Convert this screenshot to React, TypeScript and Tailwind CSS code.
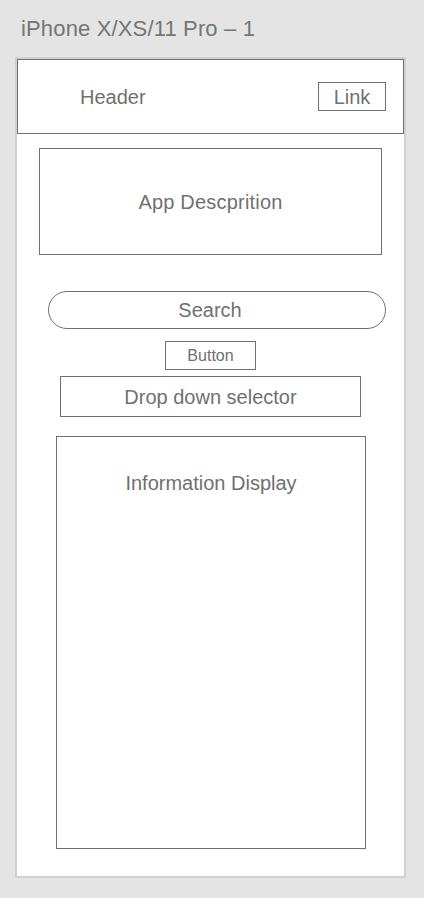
export default function App() {
  const font = { fontFamily: '"Liberation Sans", Arial, sans-serif' };
  return (
    <div className="min-h-screen bg-[#e4e4e4] text-[#707070]" style={font}>
      <div className="pl-[21px] pt-[16px] text-[22px] leading-[26px] tracking-[0.15px] text-[#757575]">
        iPhone X/XS/11 Pro – 1
      </div>

      <div className="ml-[15px] mt-[15px] flex h-[821px] w-[391px] flex-col border-2 border-[#d0d0d0] bg-white">
        <header className="flex h-[75px] items-center justify-between border border-[#707070] pl-[62px] pr-[17px]">
          <span className="text-[20px] leading-[24px]">Header</span>
          <a className="flex h-[29px] w-[68px] items-center justify-center border border-[#707070] text-[20px] leading-[24px]">
            Link
          </a>
        </header>

        <section className="ml-[22px] mt-[14px] flex h-[107px] w-[343px] items-center justify-center border border-[#707070] text-[20px] tracking-[0.2px]">
          App Descprition
        </section>

        <div className="ml-[31px] mt-[36px] flex h-[38px] w-[338px] items-center justify-center rounded-full border border-[#707070] pr-[14px] text-[20px]">
          Search
        </div>

        <button className="ml-[148px] mt-[12px] flex h-[29px] w-[91px] items-center justify-center border border-[#707070] text-[16px]">
          Button
        </button>

        <div className="ml-[43px] mt-[6px] flex h-[41px] w-[301px] items-center justify-center border border-[#707070] text-[20px]">
          Drop down selector
        </div>

        <section className="ml-[39px] mt-[19px] h-[413px] w-[310px] border border-[#707070] pt-[34px] text-center text-[20px] leading-[24px]">
          Information Display
        </section>
      </div>
    </div>
  );
}
